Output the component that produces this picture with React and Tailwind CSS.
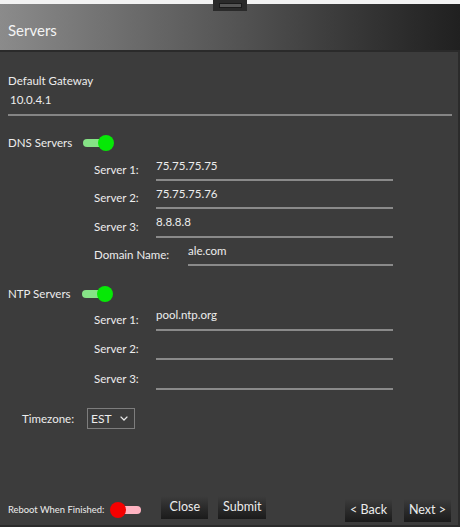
import React from "react";

const dnsServers = [
  { label: "Server 1:", value: "75.75.75.75", h: "h-[28px]" },
  { label: "Server 2:", value: "75.75.75.76", h: "h-[28px]" },
  { label: "Server 3:", value: "8.8.8.8", h: "h-[29px]" },
];

const ntpServers = [
  { label: "Server 1:", value: "pool.ntp.org", h: "h-[29px]" },
  { label: "Server 2:", value: "", h: "h-[29px]" },
  { label: "Server 3:", value: "", h: "h-[30px]" },
];

function GreenToggle() {
  return (
    <div className="relative h-4 w-[31px]">
      <div className="absolute left-0 top-[4px] h-[8px] w-[20px] rounded-full bg-[#86e386]" />
      <div className="absolute right-0 top-0 size-4 rounded-full bg-[#06e806]" />
    </div>
  );
}

function RedToggle() {
  return (
    <div className="relative h-4 w-[31px]">
      <div className="absolute right-0 top-[4px] h-[8px] w-[23px] rounded-full bg-[#ffb3c1]" />
      <div className="absolute left-0 top-0 size-4 rounded-full bg-[#f50000]" />
    </div>
  );
}

function ServerRow({ label, value, h, labelW = "w-[62px]", inputW = "w-[237px]" }) {
  return (
    <div className={`flex items-end pl-[86px] ${h}`}>
      <label className={`${labelW} mb-[3px] leading-4`}>{label}</label>
      <div className={`${inputW} h-full border-b-2 border-[#8a8a8a] pt-[5px] leading-4`}>
        {value}
      </div>
    </div>
  );
}

function Button({ children, className = "" }) {
  return (
    <button
      className={`h-[23px] w-[47px] bg-gradient-to-b from-[#3c3c3c] to-[#1b1b1b] text-[12.5px] leading-none text-[#ececec] ${className}`}
    >
      {children}
    </button>
  );
}

export default function App() {
  return (
    <div className="flex h-[527px] w-[460px] flex-col font-['Lato',sans-serif] text-[11.5px] text-[#ededed]">
      {/* window grip */}
      <div className="relative h-[4px] bg-[#f2f2f2]">
        <div className="absolute left-[213px] top-0 z-10 flex h-[11px] w-[34px] justify-center bg-[#2a2a2a] pt-[3px]">
          <div className="h-[5px] w-[23px] border border-[#1a1a1a] bg-[#555]" />
        </div>
      </div>

      <div className="flex h-[48px] items-center border-b-2 border-[#2a2a2a] bg-gradient-to-r from-[#8b8b8b] via-[#555555] to-[#202020] pl-2 pt-[7px]">
        <h1 className="text-[15px] text-[#f4f4f4]">Servers</h1>
      </div>

      <div className="flex flex-1 flex-col border-b-2 border-r-2 border-[#2b2b2b] bg-[#3c3c3c] pl-2 pr-[6px] pt-[21px]">
        <label className="leading-4">Default Gateway</label>
        <div className="mt-[3px] h-[24px] border-b-2 border-[#858585] pl-[2px] leading-4">10.0.4.1</div>

        <div className="mt-[19px] flex h-4 items-center gap-[11px]">
          <span>DNS Servers</span>
          <GreenToggle />
        </div>
        <div className="mt-[2px]">
          {dnsServers.map((s) => (
            <ServerRow key={s.label} {...s} />
          ))}
          <ServerRow label="Domain Name:" value="ale.com" h="h-[28px]" labelW="w-[94px]" inputW="w-[205px]" />
        </div>

        <div className="mt-[20px] flex h-4 items-center gap-[11px]">
          <span>NTP Servers</span>
          <GreenToggle />
        </div>
        <div>
          {ntpServers.map((s) => (
            <ServerRow key={s.label} {...s} />
          ))}
        </div>

        <div className="ml-[14px] mt-[18px] flex items-center gap-[14px]">
          <label className="w-[51px]">Timezone:</label>
          <div className="flex h-[21px] w-[48px] items-center justify-between border border-[#7d7d7d] pl-[3px] pr-[6px] text-[12px]">
            <span>EST</span>
            <svg width="8" height="5" viewBox="0 0 8 5" fill="none">
              <path d="M0.6 0.6 L4 4 L7.4 0.6" stroke="#e8e8e8" strokeWidth="1.3" />
            </svg>
          </div>
        </div>

        <div className="mt-auto flex items-start pb-[3px] pr-px">
          <div className="mt-[6px] flex h-4 items-center gap-[6px]">
            <span className="text-[9.4px]">Reboot When Finished:</span>
            <RedToggle />
          </div>
          <Button className="ml-[20px]">Close</Button>
          <Button className="ml-[10px] w-[48px]">Submit</Button>
          <div className="ml-auto mt-[3px] flex gap-[12px]">
            <Button>&lt; Back</Button>
            <Button>Next &gt;</Button>
          </div>
        </div>
      </div>
    </div>
  );
}
